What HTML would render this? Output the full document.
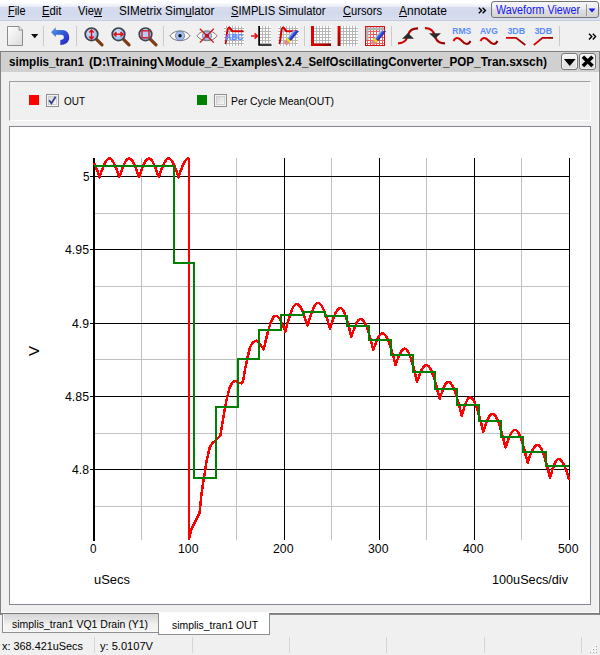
<!DOCTYPE html>
<html><head><meta charset="utf-8"><title>Waveform Viewer</title>
<style>
html,body{margin:0;padding:0}
body{width:600px;height:655px;overflow:hidden;background:#f0f0f0;position:relative;font-family:"Liberation Sans",sans-serif;color:#000}
div,span{position:absolute;box-sizing:border-box}
.t{white-space:nowrap;line-height:1.15;color:#000;transform-origin:0 0}
u{text-decoration:underline;text-underline-offset:1px}
#menubar{left:0;top:0;width:600px;height:21px;background:linear-gradient(#ffffff 0,#fefeff 2.5px,#eef1f9 5.5px,#e8ecf6 7px,#d7ddee 7.3px,#d3d9ec 13px,#d8def0 18.5px,#dce1f2 19.9px,#c3c9da 20.1px,#c8cedd 20.8px,#f0f0f0 21px)}
#combo{left:491px;top:1px;width:108px;height:17px;border:1px solid #747474;border-radius:3px;background:linear-gradient(#f6f6f6,#ececec 50%,#e0e0e0 50%,#d4d4d4)}
#combo i{position:absolute;left:94px;top:2px;width:1px;height:12px;background:#9a9a9a}
#win{left:0;top:51px;width:600px;height:563px;border:1px solid #828282;border-bottom:none;background:#f0f0f0}
#winb{left:0;top:612px;width:600px;height:3px;background:linear-gradient(#fbfbfb 0,#fbfbfb 1px,#787878 1px,#787878 2px,#8e8e8e 2px)}
#title{left:1px;top:52px;width:598px;height:20px;background:#d0d0d0}
.tb{top:53px;width:17px;height:17px;border:1px solid #767676;border-radius:3px;background:linear-gradient(#f6f6f6,#e9e9e9 50%,#dcdcdc);box-shadow:inset 0 0 0 1px rgba(255,255,255,.6)}
#legend{left:9px;top:81px;width:582px;height:40px;border:1px solid #a0a0a0;border-right-color:#fff;border-bottom-color:#fff}
#panel{left:9px;top:126px;width:582px;height:479px;background:#fff;border:1px solid #828790}
.vmaj,.vmin{top:158px;width:1px;height:382px}
.hmaj,.hmin{left:95px;height:1px;width:475px}
.vmaj,.hmaj{background:#000}.vmin,.hmin{background:#c0c0c0}
.tick{left:90px;width:3px;height:1px;background:#000}
.sep{top:26px;width:1px;height:20px;background:#cacaca}
.ssep{top:637px;width:1px;height:16px;background:#d5d5d5}
svg{position:absolute;overflow:visible}
</style></head><body>
<div id="menubar"></div>
<div id="combo"><i></i></div>
<svg style="left:588px;top:8px" width="8" height="5"><path d="M0.5,0.5 L7.5,0.5 L4,4.5Z" fill="#1515f5"/></svg>
<svg style="left:478px;top:7px" width="9" height="8"><path d="M0.8,0.8 L3.6,3.5 L0.8,6.2 M4.6,0.8 L7.4,3.5 L4.6,6.2" fill="none" stroke="#000" stroke-width="1.4"/></svg>
<svg style="left:0;top:0" width="600" height="51" viewBox="0 0 600 51">
<defs>
<linearGradient id="gdoc" x1="0" y1="0" x2="1" y2="1"><stop offset="0" stop-color="#ffffff"/><stop offset="1" stop-color="#dcdcdc"/></linearGradient>
<linearGradient id="gundo" x1="0" y1="0" x2="1" y2="1"><stop offset="0" stop-color="#5aa0ea"/><stop offset="0.5" stop-color="#3058d8"/><stop offset="1" stop-color="#2a1cc0"/></linearGradient>
<radialGradient id="glens" cx="0.4" cy="0.35" r="0.7"><stop offset="0" stop-color="#d6e6ff"/><stop offset="1" stop-color="#8fb4f0"/></radialGradient>
<linearGradient id="gred" x1="0" y1="0" x2="1" y2="0"><stop offset="0" stop-color="#e80000"/><stop offset="1" stop-color="#8c0000"/></linearGradient>
<linearGradient id="gredv" x1="0" y1="0" x2="0" y2="1"><stop offset="0" stop-color="#e80000"/><stop offset="1" stop-color="#a00000"/></linearGradient>
<linearGradient id="gpen" x1="0" y1="0" x2="1" y2="1"><stop offset="0" stop-color="#7aa8ff"/><stop offset="1" stop-color="#1030c0"/></linearGradient>
<pattern id="grid" x="0" y="0" width="3" height="3" patternUnits="userSpaceOnUse"><rect width="3" height="3" fill="#fff"/><path d="M0,1.5H3M1.5,0V3" stroke="#b6b6b6" stroke-width="1"/></pattern>
<pattern id="gridr" x="0" y="0" width="3" height="3" patternUnits="userSpaceOnUse"><rect width="3" height="3" fill="#fff"/><path d="M0,1.5H3M1.5,0V3" stroke="#ec5c5c" stroke-width="1"/></pattern>
<g id="mag"><line x1="5" y1="5" x2="10.5" y2="10.5" stroke="#7a3c10" stroke-width="3.2" stroke-linecap="round"/><circle cx="0" cy="0" r="6.3" fill="url(#glens)" stroke="#3c4248" stroke-width="1.7"/></g>
<g id="eye"><path d="M-10,0 C-6,-6.5 6,-6.5 10,0 C6,6.5 -6,6.5 -10,0Z" fill="#fffaf0" stroke="#6a6a6a" stroke-width="0.9"/><circle cx="0" cy="0" r="4.6" fill="#a4bef0" stroke="#6078b0" stroke-width="0.8"/><circle cx="0" cy="0" r="1.7" fill="#101010"/></g>
<linearGradient id="gpen2" x1="0" y1="0" x2="1" y2="0"><stop offset="0" stop-color="#c4d8ff"/><stop offset="0.45" stop-color="#3c64e0"/><stop offset="1" stop-color="#1020b0"/></linearGradient><g id="pencil"><path d="M-2.3,1.5 L2.3,-1.5 L2.3,11.5 L-2.3,11.5Z" fill="url(#gpen2)"/><rect x="-2.6" y="11.3" width="5.2" height="2.2" fill="#f2dc00"/><path d="M-2.4,13.5 H2.4 V16.8 Q0,18.8 -2.4,16.8Z" fill="#dc8c90"/></g>
</defs>
<!-- new doc -->
<path d="M7.5,26.5 H19 L22.5,30 V45.5 H7.5Z" fill="url(#gdoc)" stroke="#8c8c8c" stroke-width="1"/>
<path d="M19,26.5 V30 H22.5" fill="#f4f4f4" stroke="#8c8c8c" stroke-width="1"/>
<path d="M31,34 H38.4 L34.7,38.3Z" fill="#101010"/>
<!-- undo -->
<path d="M51,32.2 L55.8,27.3 L55.8,29.9 L62,29.9 C66.5,29.9 69.2,33 69.2,37.4 C69.2,42 65.5,44.9 60.3,44.9 L60.3,40 C62.5,40 63.9,39 63.9,37.3 C63.9,35.6 62.8,34.8 61,34.8 L55.8,34.8 L55.8,37 Z" fill="url(#gundo)"/>
<!-- magnifiers -->
<use href="#mag" x="91.5" y="34.3"/><use href="#mag" x="118.5" y="34.3"/><use href="#mag" x="145.5" y="34.3"/>
<path d="M91.5,30.2 V38.6 M89.3,32.4 L91.5,30 L93.7,32.4 M89.3,36.4 L91.5,38.8 L93.7,36.4" fill="none" stroke="#e01010" stroke-width="1.5"/>
<path d="M114.3,34.3 H122.7 M116.5,32.1 L114.1,34.3 L116.5,36.5 M120.5,32.1 L122.9,34.3 L120.5,36.5" fill="none" stroke="#e01010" stroke-width="1.5"/>
<rect x="142" y="30.8" width="7" height="7" fill="#b8ccf4" stroke="#d02030" stroke-width="1.5"/>
<!-- eyes -->
<use href="#eye" x="180" y="35.8"/><use href="#eye" x="207" y="35.8"/>
<circle cx="207" cy="35.8" r="1.8" fill="#c00000"/>
<path d="M199.8,28.8 L213.8,42.6 M213.8,28.8 L199.8,42.6" stroke="#d81010" stroke-width="1.3"/>
<!-- ABC graph -->
<rect x="224" y="26" width="20" height="20" fill="url(#grid)"/>
<path d="M225,43.5 C227,43 226.5,27.5 229,27.5 C231,27.5 230.5,31.2 233,31.2 H243.5" fill="none" stroke="#d00000" stroke-width="2.1"/>
<text x="225.6" y="39.9" font-family="Liberation Sans,sans-serif" font-weight="bold" font-size="9" fill="#5a8cff" stroke="#5a8cff" stroke-width="0.3" textLength="17.6" lengthAdjust="spacingAndGlyphs">ABC</text>
<!-- arrow grid -->
<rect x="260" y="26" width="11" height="18" fill="url(#grid)"/>
<path d="M259.1,26 V45 H271.5" fill="none" stroke="#000" stroke-width="1.7"/>
<path d="M251,36 H257 M254.6,33.4 L257.4,36 L254.6,38.6" fill="none" stroke="#e01010" stroke-width="1.6"/>
<!-- graph + pencil -->
<rect x="278" y="26" width="20" height="20" fill="url(#grid)"/>
<path d="M279,43.5 C281,43 280.5,27.5 283,27.5 C285,27.5 284.5,31.2 287,31.2 H297.5" fill="none" stroke="#d00000" stroke-width="2.1"/>
<use href="#pencil" transform="translate(296.2,30.6) rotate(39.5)"/>
<!-- red L grid -->
<rect x="313" y="26" width="18" height="18" fill="url(#grid)"/>
<path d="M311,26 H314 V43.4 H331 V46 H311Z" fill="url(#gred)"/>
<!-- red bar grid -->
<rect x="340" y="26" width="18" height="20" fill="url(#grid)"/>
<rect x="337.6" y="26" width="2.8" height="20" fill="url(#gredv)"/>
<!-- red grid pencil -->
<rect x="365.5" y="26.5" width="19" height="19" fill="url(#gridr)" stroke="#d01010" stroke-width="1"/>
<path d="M367.2,40 V28.8 H384" fill="none" stroke="#b2b2b2" stroke-width="2.6"/>
<use href="#pencil" transform="translate(383.4,30.8) rotate(39.5)"/>
<!-- curves -->
<path d="M398,43.3 C408,43.5 407,35 408.5,34 C410,29 414,28.3 418,28.3" fill="none" stroke="url(#gred)" stroke-width="2.2"/>
<path d="M408,33 L414,38.7 H402Z" fill="#2c2c2c"/>
<path d="M425,28.2 C435,28 434,36.5 435.5,37.5 C437,42.5 441,43.3 445,43.3" fill="none" stroke="url(#gred)" stroke-width="2.2"/>
<path d="M429,33.2 H441 L435,38.8Z" fill="#2c2c2c"/>
<!-- RMS AVG 3DB -->
<g font-family="Liberation Sans,sans-serif" font-weight="bold" font-size="8.4" fill="#5a8cff">
<text x="452.3" y="34.2" textLength="19" lengthAdjust="spacingAndGlyphs">RMS</text>
<text x="480" y="34.2" textLength="17.8" lengthAdjust="spacingAndGlyphs">AVG</text>
<text x="507.4" y="34.2" textLength="17.8" lengthAdjust="spacingAndGlyphs">3DB</text>
<text x="534.4" y="34.2" textLength="17.8" lengthAdjust="spacingAndGlyphs">3DB</text>
</g>
<path d="M453.5,41 C455.5,37 458.5,37 462,41 C465.5,45 468.5,45 470.5,41" fill="none" stroke="url(#gred)" stroke-width="2"/>
<path d="M480.5,41 C482.5,37 485.5,37 489,41 C492.5,45 495.5,45 497.5,41" fill="none" stroke="url(#gred)" stroke-width="2"/>
<path d="M506,37.8 H516 L525.3,45" fill="none" stroke="url(#gred)" stroke-width="1.8"/>
<path d="M533.8,45 L542.5,37.8 H553" fill="none" stroke="url(#gred)" stroke-width="1.8"/>
<!-- chevron -->
<path d="M589,33.8 L591.8,36.6 L589,39.4 M592.8,33.8 L595.6,36.6 L592.8,39.4" fill="none" stroke="#000" stroke-width="1.4"/>
</svg>
<div class="sep" style="left:43px"></div><div class="sep" style="left:76px"></div><div class="sep" style="left:163px"></div><div class="sep" style="left:304px"></div><div class="sep" style="left:391px"></div><div class="sep" style="left:559px"></div>

<div id="win"></div>
<div id="winb"></div>
<div style="left:598px;top:72px;width:1px;height:541px;background:#fafafa"></div>
<div style="left:0;top:612px;width:1px;height:3px;background:#808080"></div><div style="left:599px;top:612px;width:1px;height:3px;background:#808080"></div>
<div id="title"></div>
<div class="tb" style="left:561px"></div>
<div class="tb" style="left:579px"></div>
<svg style="left:561px;top:53px" width="17" height="17"><path d="M2.9,6 L14.6,6 L8.75,13Z" fill="#000"/></svg>
<svg style="left:579px;top:53px" width="17" height="17"><path d="M5.2,5 L12.2,11.7 M12.2,5 L5.2,11.7" stroke="#000" stroke-width="3.6" stroke-linecap="square" fill="none"/></svg>
<div id="legend"></div>
<div style="left:29px;top:95px;width:10px;height:10px;background:#ff0000"></div>
<div style="left:46px;top:94px;width:13px;height:13px;border:1px solid #8e8f8f;background:#f4f4f4"><div style="left:1px;top:1px;width:9px;height:9px;border:1px solid #cfd0d0;background:linear-gradient(135deg,#d8d8d8,#f6f6f6)"></div></div>
<svg style="left:46px;top:94px" width="13" height="13"><path d="M3.2,6.2 L5.4,9.4 L9.6,2.8" fill="none" stroke="#31408c" stroke-width="1.8"/></svg>
<div style="left:197px;top:95px;width:10px;height:10px;background:#008000"></div>
<div style="left:214px;top:94px;width:13px;height:13px;border:1px solid #8e8f8f;background:#f4f4f4"><div style="left:1px;top:1px;width:9px;height:9px;border:1px solid #cfd0d0;background:linear-gradient(135deg,#d8d8d8,#f6f6f6)"></div></div>
<div id="panel"></div>
<!-- grid -->
<div class="vmin" style="left:141px"></div><div class="vmin" style="left:236px"></div><div class="vmin" style="left:331px"></div><div class="vmin" style="left:426px"></div><div class="vmin" style="left:521px"></div>
<div class="hmin" style="top:213px"></div><div class="hmin" style="top:286px"></div><div class="hmin" style="top:359px"></div><div class="hmin" style="top:433px"></div><div class="hmin" style="top:506px"></div>
<div class="vmaj" style="left:189px"></div><div class="vmaj" style="left:284px"></div><div class="vmaj" style="left:379px"></div><div class="vmaj" style="left:474px"></div><div class="vmaj" style="left:569px"></div>
<div class="hmaj" style="top:176px"></div><div class="hmaj" style="top:249px"></div><div class="hmaj" style="top:323px"></div><div class="hmaj" style="top:396px"></div><div class="hmaj" style="top:469px"></div>
<div class="vmaj" style="left:93px;width:2px;height:383px"></div>
<div class="tick" style="top:176px"></div><div class="tick" style="top:249px"></div><div class="tick" style="top:323px"></div><div class="tick" style="top:396px"></div><div class="tick" style="top:469px"></div>
<svg style="left:0;top:0" width="600" height="655" shape-rendering="crispEdges">
<polyline points="94.0,162.9 94.5,163.9 95.0,165.0 95.5,166.1 96.0,167.4 96.5,168.7 97.0,170.0 97.5,171.4 98.0,172.9 98.5,174.3 99.0,175.8 99.5,177.3 100.0,175.8 100.5,174.3 101.0,172.9 101.5,171.4 102.0,170.0 102.5,168.7 103.0,167.4 103.5,166.1 104.0,165.0 104.5,163.9 105.0,162.9 105.5,162.0 106.0,161.1 106.5,160.4 107.0,159.8 107.5,159.3 108.0,158.9 108.5,158.7 109.0,158.5 109.5,158.5 110.0,158.6 110.5,158.8 111.0,159.1 111.5,159.6 112.0,160.1 112.5,160.8 113.0,161.5 113.5,162.4 114.0,163.4 114.5,164.4 115.0,165.5 115.5,166.7 116.0,168.0 116.5,169.3 117.0,170.7 117.5,172.1 118.0,173.6 118.5,175.1 119.0,176.6 119.5,176.6 120.0,175.1 120.5,173.6 121.0,172.1 121.5,170.7 122.0,169.3 122.5,168.0 123.0,166.7 123.5,165.5 124.0,164.4 124.5,163.4 125.0,162.4 125.5,161.5 126.0,160.8 126.5,160.1 127.0,159.6 127.5,159.1 128.0,158.8 128.5,158.6 129.0,158.5 129.5,158.5 130.0,158.7 130.5,158.9 131.0,159.3 131.5,159.8 132.0,160.4 132.5,161.1 133.0,162.0 133.5,162.9 134.0,163.9 134.5,165.0 135.0,166.1 135.5,167.4 136.0,168.7 136.5,170.0 137.0,171.4 137.5,172.9 138.0,174.3 138.5,175.8 139.0,177.3 139.5,175.8 140.0,174.3 140.5,172.9 141.0,171.4 141.5,170.0 142.0,168.7 142.5,167.4 143.0,166.1 143.5,165.0 144.0,163.9 144.5,162.9 145.0,162.0 145.5,161.1 146.0,160.4 146.5,159.8 147.0,159.3 147.5,158.9 148.0,158.7 148.5,158.5 149.0,158.5 149.5,158.6 150.0,158.8 150.5,159.1 151.0,159.6 151.5,160.1 152.0,160.8 152.5,161.5 153.0,162.4 153.5,163.4 154.0,164.4 154.5,165.5 155.0,166.7 155.5,168.0 156.0,169.3 156.5,170.7 157.0,172.1 157.5,173.6 158.0,175.1 158.5,176.6 159.0,176.6 159.5,175.1 160.0,173.6 160.5,172.1 161.0,170.7 161.5,169.3 162.0,168.0 162.5,166.7 163.0,165.5 163.5,164.4 164.0,163.4 164.5,162.4 165.0,161.5 165.5,160.8 166.0,160.1 166.5,159.6 167.0,159.1 167.5,158.8 168.0,158.6 168.5,158.5 169.0,158.5 169.5,158.7 170.0,158.9 170.5,159.3 171.0,159.8 171.5,160.4 172.0,161.1 172.5,162.0 173.0,162.9 173.5,163.9 174.0,165.0 174.5,166.1 175.0,167.4 175.5,168.7 176.0,170.0 176.5,171.4 177.0,172.9 177.5,174.3 178.0,175.8 178.5,177.3 179.0,175.8 179.5,174.3 180.0,172.9 180.5,171.4 181.0,170.0 181.5,168.7 182.0,167.4 182.5,166.1 183.0,165.0 183.5,163.9 184.0,162.9 184.5,162.0 185.0,161.1 185.5,160.4 186.0,159.8 186.5,159.3 187.0,158.9 187.5,158.7 188.0,158.5 189.0,159.0 189.0,538.5 191.2,529.7 196.0,520.0 199.5,513.0 200.6,503.0 201.6,493.0 204.0,477.7 206.4,462.4 208.0,454.5 209.6,448.0 211.0,445.0 212.5,443.0 216.2,440.0 220.2,436.0 221.0,432.0 221.8,426.5 225.0,407.3 227.4,396.0 229.8,387.3 231.4,384.0 233.0,382.0 236.2,380.9 239.5,383.0 241.9,383.3 242.8,381.5 243.5,378.5 245.0,369.6 247.5,357.6 249.9,348.0 251.5,344.5 253.0,342.4 256.3,340.5 258.5,342.0 260.3,344.8 263.7,349.3 264.5,346.0 265.2,342.8 266.0,339.6 266.7,336.5 267.5,333.5 268.2,330.7 269.0,328.0 269.8,325.6 270.5,323.4 271.3,321.4 272.0,319.8 272.8,318.4 273.5,317.2 274.3,316.4 275.0,316.0 275.8,315.8 276.4,315.9 277.0,316.1 277.6,316.5 278.2,317.0 278.8,317.7 279.4,318.5 280.0,319.4 280.6,320.5 281.1,321.6 281.7,322.9 282.3,324.2 282.9,325.6 283.5,327.1 284.1,328.6 284.7,330.1 285.3,331.7 286.0,329.0 286.7,326.3 287.4,323.7 288.1,321.1 288.9,318.6 289.6,316.3 290.3,314.1 291.0,312.1 291.7,310.3 292.4,308.7 293.1,307.3 293.9,306.1 294.6,305.2 295.3,304.5 296.0,304.1 296.7,304.0 297.4,304.1 298.1,304.4 298.7,304.9 299.4,305.7 300.1,306.6 300.8,307.7 301.4,308.9 302.1,310.4 302.8,312.0 303.4,313.7 304.1,315.5 304.8,317.5 305.5,319.5 306.1,321.5 306.8,323.7 307.5,325.8 308.2,323.6 308.8,321.4 309.5,319.2 310.1,317.1 310.8,315.1 311.4,313.1 312.1,311.3 312.8,309.7 313.4,308.2 314.1,306.8 314.7,305.7 315.4,304.7 316.0,304.0 316.7,303.4 317.3,303.1 318.0,303.0 318.8,303.1 319.5,303.5 320.2,304.1 321.0,305.0 321.8,306.0 322.5,307.3 323.2,308.8 324.0,310.5 324.8,312.4 325.5,314.4 326.2,316.6 327.0,318.9 327.8,321.2 328.5,323.7 329.2,326.2 330.0,328.7 330.6,326.7 331.3,324.7 331.9,322.7 332.6,320.8 333.2,318.9 333.9,317.2 334.5,315.6 335.1,314.1 335.8,312.7 336.4,311.5 337.1,310.4 337.7,309.6 338.4,308.9 339.0,308.4 339.7,308.1 340.3,308.0 341.0,308.1 341.7,308.6 342.4,309.2 343.1,310.2 343.7,311.4 344.4,312.8 345.1,314.5 345.8,316.4 346.5,318.5 347.2,320.8 347.9,323.2 348.6,325.7 349.2,328.4 349.9,331.1 350.6,333.9 351.3,336.7 351.9,335.0 352.5,333.2 353.1,331.6 353.7,329.9 354.3,328.4 354.9,326.9 355.5,325.5 356.1,324.2 356.6,323.0 357.2,322.0 357.8,321.1 358.4,320.3 359.0,319.8 359.6,319.3 360.2,319.1 360.8,319.0 361.6,319.1 362.4,319.6 363.1,320.3 363.9,321.4 364.7,322.7 365.5,324.2 366.3,326.0 367.1,328.1 367.8,330.3 368.6,332.8 369.4,335.4 370.2,338.1 371.0,341.0 371.7,344.0 372.5,347.0 373.3,350.0 373.9,348.4 374.4,346.7 375.0,345.2 375.6,343.6 376.2,342.1 376.8,340.7 377.3,339.4 377.9,338.2 378.5,337.1 379.1,336.1 379.6,335.3 380.2,334.6 380.8,334.0 381.4,333.6 381.9,333.4 382.5,333.3 383.3,333.5 384.1,333.9 384.9,334.7 385.8,335.7 386.6,337.0 387.4,338.6 388.2,340.5 389.0,342.6 389.8,344.9 390.6,347.4 391.4,350.1 392.2,352.9 393.1,355.8 393.9,358.8 394.7,361.9 395.5,365.0 396.1,363.4 396.6,361.8 397.2,360.3 397.8,358.8 398.4,357.3 398.9,355.9 399.5,354.7 400.1,353.5 400.7,352.4 401.2,351.4 401.8,350.6 402.4,349.9 403.0,349.4 403.6,349.0 404.1,348.8 404.7,348.7 405.5,348.9 406.2,349.3 407.0,350.1 407.8,351.2 408.5,352.6 409.3,354.3 410.1,356.3 410.9,358.5 411.6,360.9 412.4,363.5 413.2,366.3 413.9,369.3 414.7,372.3 415.5,375.5 416.2,378.7 417.0,382.0 417.6,380.3 418.2,378.7 418.7,377.1 419.3,375.5 419.9,374.0 420.5,372.6 421.1,371.2 421.6,370.0 422.2,368.9 422.8,367.9 423.4,367.0 424.0,366.3 424.6,365.7 425.1,365.3 425.7,365.1 426.3,365.0 427.1,365.2 428.0,365.7 428.8,366.5 429.6,367.6 430.5,369.0 431.3,370.7 432.2,372.7 433.0,375.0 433.8,377.4 434.7,380.1 435.5,383.0 436.4,386.0 437.2,389.1 438.0,392.4 438.9,395.7 439.7,399.0 440.2,397.3 440.8,395.7 441.3,394.1 441.9,392.5 442.4,391.0 442.9,389.6 443.5,388.2 444.0,387.0 444.5,385.9 445.1,384.9 445.6,384.0 446.1,383.3 446.7,382.7 447.2,382.3 447.8,382.1 448.3,382.0 449.1,382.2 450.0,382.6 450.8,383.5 451.6,384.6 452.5,386.0 453.3,387.7 454.2,389.7 455.0,391.9 455.8,394.4 456.7,397.0 457.5,399.9 458.4,402.9 459.2,406.0 460.0,409.2 460.9,412.5 461.7,415.8 462.2,414.0 462.7,412.2 463.3,410.5 463.8,408.8 464.3,407.2 464.8,405.6 465.3,404.2 465.9,402.9 466.4,401.7 466.9,400.6 467.4,399.7 467.9,398.9 468.4,398.3 469.0,397.9 469.5,397.6 470.0,397.5 470.8,397.7 471.7,398.2 472.5,399.0 473.3,400.1 474.2,401.5 475.0,403.3 475.8,405.3 476.6,407.5 477.5,410.0 478.3,412.7 479.1,415.6 480.0,418.6 480.8,421.8 481.6,425.0 482.5,428.3 483.3,431.7 483.9,430.0 484.4,428.2 485.0,426.6 485.6,424.9 486.2,423.4 486.8,421.9 487.3,420.5 487.9,419.2 488.5,418.0 489.1,417.0 489.6,416.1 490.2,415.3 490.8,414.8 491.4,414.3 491.9,414.1 492.5,414.0 493.3,414.2 494.1,414.6 494.9,415.4 495.8,416.6 496.6,418.0 497.4,419.6 498.2,421.6 499.0,423.8 499.8,426.2 500.6,428.9 501.4,431.7 502.2,434.7 503.1,437.8 503.9,441.0 504.7,444.2 505.5,447.5 506.1,445.8 506.7,444.1 507.3,442.4 507.9,440.8 508.5,439.3 509.1,437.8 509.7,436.4 510.2,435.1 510.8,434.0 511.4,432.9 512.0,432.1 512.6,431.3 513.2,430.8 513.8,430.3 514.4,430.1 515.0,430.0 515.8,430.2 516.6,430.6 517.4,431.4 518.1,432.5 518.9,433.9 519.7,435.5 520.5,437.4 521.3,439.6 522.1,442.0 522.9,444.5 523.7,447.3 524.5,450.2 525.2,453.2 526.0,456.3 526.8,459.5 527.6,462.7 528.2,461.0 528.8,459.2 529.4,457.6 530.0,455.9 530.6,454.4 531.2,452.9 531.8,451.5 532.5,450.2 533.1,449.0 533.7,448.0 534.3,447.1 534.9,446.3 535.5,445.8 536.1,445.3 536.7,445.1 537.3,445.0 538.1,445.2 538.9,445.6 539.7,446.4 540.5,447.5 541.3,448.8 542.1,450.5 542.9,452.4 543.6,454.5 544.4,456.9 545.2,459.5 546.0,462.2 546.8,465.1 547.6,468.1 548.4,471.2 549.2,474.4 550.0,477.6 550.5,475.8 551.1,474.0 551.6,472.2 552.2,470.5 552.7,468.8 553.3,467.3 553.8,465.8 554.4,464.4 554.9,463.2 555.4,462.1 556.0,461.2 556.5,460.4 557.1,459.8 557.6,459.4 558.2,459.1 558.7,459.0 559.4,459.1 560.1,459.4 560.8,460.0 561.5,460.8 562.2,461.8 562.9,462.9 563.6,464.3 564.4,465.8 565.1,467.5 565.8,469.4 566.5,471.3 567.2,473.4 567.9,475.5 568.6,477.8 569.3,480.0" fill="none" stroke="#ff0000" stroke-width="2.5" stroke-linejoin="round"/>
<polyline points="94.0,165.5 174.0,165.5 174.0,263.0 194.2,263.0 194.2,478.0 216.0,478.0 216.0,406.5 238.0,406.5 238.0,359.0 259.2,359.0 259.2,330.0 281.2,330.0 281.2,315.0 303.0,315.0 303.0,311.7 325.0,311.7 325.0,315.8 347.2,315.8 347.2,325.8 369.2,325.8 369.2,339.7 390.8,339.7 390.8,354.7 413.0,354.7 413.0,371.7 435.0,371.7 435.0,388.7 457.0,388.7 457.0,405.0 478.8,405.0 478.8,420.5 501.2,420.5 501.2,436.7 523.0,436.7 523.0,451.7 545.7,451.7 545.7,466.0 569.0,466.0" fill="none" stroke="#008000" stroke-width="2" stroke-linejoin="miter"/>
</svg>
<span class="tv" style="position:absolute;left:23.7px;top:340.9px;width:20px;height:20px;line-height:20px;font-size:15px;text-align:center;transform:rotate(-90deg);transform-origin:center">V</span>
<!-- tabs -->
<div style="left:2px;top:614px;width:158px;height:19px;border:1px solid #8c8e94;border-top:none;background:linear-gradient(#d6d6d6,#e4e4e4 35%,#f2f2f2 60%,#f4f4f4);box-shadow:inset 1px -1px 0 #fafafa"></div>
<div style="left:158px;top:613px;width:112px;height:22px;border:1px solid #8c8e94;border-top:none;background:#fff"></div>
<!-- status -->
<div class="ssep" style="left:94px"></div><div class="ssep" style="left:192px"></div><div class="ssep" style="left:289px"></div><div class="ssep" style="left:386px"></div><div class="ssep" style="left:484px"></div><div class="ssep" style="left:581px"></div>
<svg style="left:0;top:0" width="600" height="655" shape-rendering="crispEdges"><rect x="595" y="645" width="1" height="1" fill="#fff"/><rect x="596" y="646" width="1" height="1" fill="#a6a6a6"/><rect x="592" y="648" width="1" height="1" fill="#fff"/><rect x="593" y="649" width="1" height="1" fill="#a6a6a6"/><rect x="595" y="648" width="1" height="1" fill="#fff"/><rect x="596" y="649" width="1" height="1" fill="#a6a6a6"/><rect x="589" y="651" width="1" height="1" fill="#fff"/><rect x="590" y="652" width="1" height="1" fill="#a6a6a6"/><rect x="592" y="651" width="1" height="1" fill="#fff"/><rect x="593" y="652" width="1" height="1" fill="#a6a6a6"/><rect x="595" y="651" width="1" height="1" fill="#fff"/><rect x="596" y="652" width="1" height="1" fill="#a6a6a6"/></svg>
<span class="t" id="t0" style="left:7.90px;top:5.24px;font-size:12px;transform:scaleX(0.9040);"><u>F</u>ile</span>
<span class="t" id="t1" style="left:42.00px;top:5.24px;font-size:12px;transform:scaleX(0.9419);"><u>E</u>dit</span>
<span class="t" id="t2" style="left:78.00px;top:5.24px;font-size:12px;transform:scaleX(0.9298);">Vie<u>w</u></span>
<span class="t" id="t3" style="left:119.00px;top:5.24px;font-size:12px;transform:scaleX(0.9740);">SIMetrix Sim<u>u</u>lator</span>
<span class="t" id="t4" style="left:231.00px;top:5.24px;font-size:12px;transform:scaleX(0.9320);"><u>S</u>IMPLIS Simulator</span>
<span class="t" id="t5" style="left:343.00px;top:5.24px;font-size:12px;transform:scaleX(0.9282);"><u>C</u>ursors</span>
<span class="t" id="t6" style="left:399.00px;top:5.24px;font-size:12px;transform:scaleX(0.9987);"><u>A</u>nnotate</span>
<span class="t" id="t7" style="left:496.00px;top:4.24px;font-size:12px;transform:scaleX(0.8933);color:#1515f5">Waveform Viewer</span>
<div id="titletext" style="left:0;top:0"><span class="t" id="t8" style="left:8.80px;top:55.64px;font-size:12px;transform:scaleX(0.9693);font-weight:bold">simplis_tran1 </span><span class="t" id="t9" style="left:88.80px;top:55.64px;font-size:12px;transform:scaleX(1.0259);font-weight:bold">(D:\Training</span><span class="t" id="t10" style="left:157.10px;top:55.64px;font-size:12px;transform:scaleX(2.0935);font-weight:normal">\</span><span class="t" id="t11" style="left:164.50px;top:55.64px;font-size:12px;transform:scaleX(0.9487);font-weight:bold">Module_2_Examples</span><span class="t" id="t12" style="left:277.10px;top:55.64px;font-size:12px;transform:scaleX(2.0037);font-weight:normal">\</span><span class="t" id="t13" style="left:284.50px;top:55.64px;font-size:12px;transform:scaleX(1.0007);font-weight:bold">2.4</span><span class="t" id="t14" style="left:302.00px;top:55.64px;font-size:12px;transform:scaleX(0.9576);font-weight:bold">_SelfOscillatingConverter</span><span class="t" id="t15" style="left:442.50px;top:55.64px;font-size:12px;transform:scaleX(0.9683);font-weight:bold">_POP</span><span class="t" id="t16" style="left:473.50px;top:55.64px;font-size:12px;transform:scaleX(0.9949);font-weight:bold">_Tran.sxsch)</span></div>
<span class="t" id="t17" style="left:63.50px;top:94.55px;font-size:11px;transform:scaleX(0.9038);">OUT</span>
<span class="t" id="t18" style="left:231.00px;top:94.55px;font-size:11px;transform:scaleX(0.9467);">Per Cycle Mean(OUT)</span>
<span class="t" id="t19" style="left:82.70px;top:169.83px;font-size:13px;transform:scaleX(0.8985);">5</span>
<span class="t" id="t20" style="left:65.20px;top:242.83px;font-size:13px;transform:scaleX(0.9481);">4.95</span>
<span class="t" id="t21" style="left:72.20px;top:316.84px;font-size:13px;transform:scaleX(0.9404);">4.9</span>
<span class="t" id="t22" style="left:65.20px;top:389.84px;font-size:13px;transform:scaleX(0.9481);">4.85</span>
<span class="t" id="t23" style="left:72.20px;top:462.84px;font-size:13px;transform:scaleX(0.9404);">4.8</span>
<span class="t" id="t24" style="left:90.35px;top:541.84px;font-size:13px;transform:scaleX(0.8985);">0</span>
<span class="t" id="t25" style="left:178.35px;top:541.84px;font-size:13px;transform:scaleX(0.9446);">100</span>
<span class="t" id="t26" style="left:273.35px;top:541.84px;font-size:13px;transform:scaleX(0.9446);">200</span>
<span class="t" id="t27" style="left:368.35px;top:541.84px;font-size:13px;transform:scaleX(0.9446);">300</span>
<span class="t" id="t28" style="left:463.35px;top:541.84px;font-size:13px;transform:scaleX(0.9446);">400</span>
<span class="t" id="t29" style="left:558.35px;top:541.84px;font-size:13px;transform:scaleX(0.9446);">500</span>
<span class="t" id="t30" style="left:94.00px;top:572.53px;font-size:13px;transform:scaleX(0.9961);">uSecs</span>
<span class="t" id="t31" style="left:491.80px;top:572.53px;font-size:13px;transform:scaleX(0.9736);">100uSecs/div</span>
<span class="t" id="t32" style="left:11.50px;top:617.54px;font-size:11px;transform:scaleX(0.9506);">simplis_tran1 VQ1 Drain (Y1)</span>
<span class="t" id="t33" style="left:172.00px;top:618.54px;font-size:11px;transform:scaleX(0.9442);">simplis_tran1 OUT</span>
<span class="t" id="t34" style="left:2.00px;top:639.54px;font-size:11px;transform:scaleX(0.9884);">x: 368.421uSecs</span>
<span class="t" id="t35" style="left:99.50px;top:639.54px;font-size:11px;transform:scaleX(1.0077);">y: 5.0107V</span>
</body></html>
